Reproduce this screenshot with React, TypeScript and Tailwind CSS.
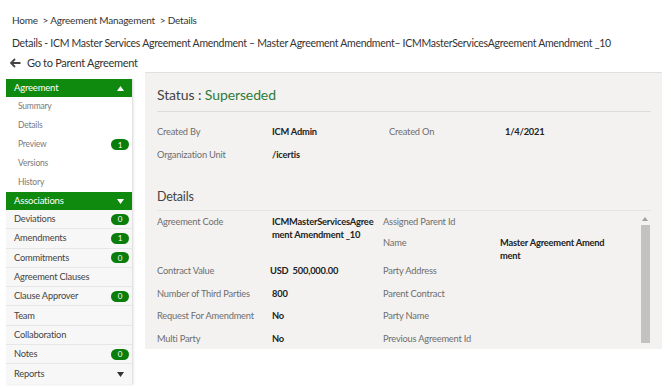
import React from "react";

const Badge = ({ n }: { n: string }) => (
  <span className="flex h-[11px] w-[18px] items-center justify-center rounded-full bg-[#0b7d0b] text-[8px] leading-none tracking-normal text-white">
    {n}
  </span>
);

const Caret = ({ up }: { up?: boolean }) => (
  <svg width="7" height="5" viewBox="0 0 7 5" className="mr-[2px]">
    {up ? <polygon points="0,5 7,5 3.5,0" fill="currentColor" /> : <polygon points="0,0 7,0 3.5,5" fill="currentColor" />}
  </svg>
);

const subItems = [
  { t: "Summary" },
  { t: "Details" },
  { t: "Preview", b: "1" },
  { t: "Versions" },
  { t: "History" },
];

const assocItems = [
  { t: "Deviations", b: "0" },
  { t: "Amendments", b: "1" },
  { t: "Commitments", b: "0" },
  { t: "Agreement Clauses" },
  { t: "Clause Approver", b: "0" },
  { t: "Team" },
  { t: "Collaboration" },
  { t: "Notes", b: "0" },
];

const Field = ({ label, value, h, lw = "w-[115px]", vw = "w-[108px]" }: { label: string; value?: React.ReactNode; h: string; lw?: string; vw?: string }) => (
  <div className={`flex ${h}`}>
    <div className={`${lw} shrink-0 text-[#6e6e6e]`}>{label}</div>
    <div className={`${vw} font-bold text-[#222] break-all`}>{value}</div>
  </div>
);

export default function App() {
  return (
    <div className="h-[391px] w-[671px] overflow-hidden bg-white font-['Lato',sans-serif] text-[#333]">
      <div className="px-[12px] pt-[14px] text-[10px] leading-[13px] tracking-[-0.2px] text-[#333]">
        Home&nbsp; &gt; Agreement Management&nbsp; &gt; Details
      </div>
      <div className="mt-[9px] whitespace-nowrap px-[12px] text-[10.5px] leading-[14px] tracking-[-0.29px] text-[#333]">
        Details - ICM Master Services Agreement Amendment – Master Agreement Amendment– ICMMasterServicesAgreement Amendment _10
      </div>
      <div className="mt-[6px] flex items-center gap-[6px] px-[10px] text-[11px] leading-[14px] tracking-[-0.3px] text-[#333]">
        <svg width="11" height="10" viewBox="0 0 11 10">
          <path d="M5 1 L1 5 L5 9 M1 5 H10.5" stroke="#444" strokeWidth="1.8" fill="none" />
        </svg>
        <span>Go to Parent Agreement</span>
      </div>

      <div className="mt-[2px] flex tracking-[-0.2px]">
        <div className="ml-[6px] mt-[7px] w-[127px] shrink-0 self-start border-r border-[#e2e2e2] shadow-[1px_1px_2px_rgba(0,0,0,0.08)]">
          <div className="flex h-[18px] items-center justify-between bg-[#0f8a0f] pl-[8px] pr-[6px] text-[9.5px] text-white">
            <span>Agreement</span>
            <Caret up />
          </div>
          {subItems.map((s) => (
            <div key={s.t} className="flex h-[19px] items-center justify-between bg-white pl-[12px] pr-[3px] text-[8.5px] text-[#7a7a7a]">
              <span>{s.t}</span>
              {s.b && <Badge n={s.b} />}
            </div>
          ))}
          <div className="flex h-[18px] items-center justify-between bg-[#0f8a0f] pl-[8px] pr-[6px] text-[9.5px] text-white">
            <span>Associations</span>
            <Caret />
          </div>
          {assocItems.map((s) => (
            <div key={s.t} className="flex h-[19.3px] items-center justify-between border-b border-[#e6e6e6] bg-[#f7f7f7] pl-[8px] pr-[3px] text-[9.3px] text-[#444]">
              <span>{s.t}</span>
              {s.b && <Badge n={s.b} />}
            </div>
          ))}
          <div className="flex h-[19.3px] items-center justify-between bg-[#f7f7f7] pl-[8px] pr-[6px] text-[9.3px] text-[#444]">
            <span>Reports</span>
            <span className="text-[#333]"><Caret /></span>
          </div>
        </div>

        <div className="ml-[12px] h-[277px] w-[517px] border-t border-[#e0e0e0] bg-[#f3f2f1] pl-[12px] pr-[11px] text-[9.3px]">
          <div className="flex h-[38px] items-end pb-[7px] text-[14px] leading-[18px] tracking-[-0.1px] text-[#444]">
            Status :&nbsp;<span className="text-[#2f7a3a]">Superseded</span>
          </div>
          <div className="border-t border-[#dcdcdc]" />
          <div className="pt-[13px]">
            <div className="flex h-[23px]">
              <Field label="Created By" value="ICM Admin" h="h-[23px]" vw="w-[117px]" />
              <Field label="Created On" value="1/4/2021" h="h-[23px]" lw="w-[116px]" />
            </div>
            <div className="flex h-[23px]">
              <Field label="Organization Unit" value="/icertis" h="h-[23px]" />
            </div>
          </div>
          <div className="mt-[18px] text-[12.5px] leading-[16px] text-[#444]">Details</div>
          <div className="mt-[5px] border-t border-[#e4e4e4]" />
          <div className="flex pt-[4px]">
            <div className="w-[226px] leading-[13px]">
              <Field label="Agreement Code" value="ICMMasterServicesAgreement Amendment _10" h="h-[49px]" vw="w-[108px]" />
              <Field label="Contract Value" value={<span>USD&nbsp; 500,000.00</span>} h="h-[22.5px]" lw="w-[113px]" />
              <Field label="Number of Third Parties" value="800" h="h-[22.5px]" />
              <Field label="Request For Amendment" value="No" h="h-[22.5px]" />
              <Field label="Multi Party" value="No" h="h-[22.5px]" />
            </div>
            <div className="w-[257px] leading-[13px]">
              <Field label="Assigned Parent Id" h="h-[21px]" lw="w-[117px]" />
              <Field label="Name" value="Master Agreement Amendment" h="h-[28px]" lw="w-[117px]" vw="w-[110px]" />
              <Field label="Party Address" h="h-[22.5px]" lw="w-[117px]" />
              <Field label="Parent Contract" h="h-[22.5px]" lw="w-[117px]" />
              <Field label="Party Name" h="h-[22.5px]" lw="w-[117px]" />
              <Field label="Previous Agreement Id" h="h-[22.5px]" lw="w-[117px]" />
            </div>
            <div className="mt-[2px] flex w-[10px] flex-col items-center">
              <svg width="6" height="4" viewBox="0 0 6 4" className="mb-[4px]">
                <polygon points="0,4 6,4 3,0" fill="#a0a0a0" />
              </svg>
              <div className="h-[118px] w-[9px] bg-[#c2c2c2]" />
            </div>
          </div>
        </div>
      </div>
    </div>
  );
}
